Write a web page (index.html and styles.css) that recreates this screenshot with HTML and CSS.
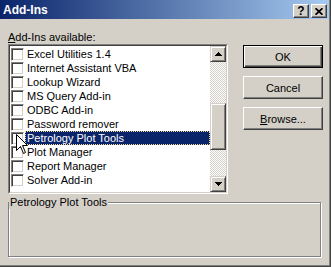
FILE: index.html
```html
<!DOCTYPE html>
<html lang="en">
<head>
    <meta charset="UTF-8">
    <title>Add-Ins</title>
    <link rel="stylesheet" href="styles.css">
</head>
<body>
    <div class="window">
        <div class="frame">
            <div class="titlebar">
                <span class="title">Add-Ins</span>
                <div class="caption-buttons">
                    <span class="cap-btn help">?</span>
                    <span class="cap-btn close">
                        <svg width="8" height="7" viewBox="0 0 8 7"><path d="M0.5 0.2 L7.5 6.8 M7.5 0.2 L0.5 6.8" stroke="#000" stroke-width="1.7"/></svg>
                    </span>
                </div>
            </div>

            <div class="content">
                <div class="main">
                    <div class="left">
                        <div class="label"><u>A</u>dd-Ins available:</div>
                        <div class="listbox">
                            <div class="listbox-inner">
                                <ul class="items">
                                    <li><span class="check"></span><span class="name">Excel Utilities 1.4</span></li>
                                    <li><span class="check"></span><span class="name">Internet Assistant VBA</span></li>
                                    <li><span class="check"></span><span class="name">Lookup Wizard</span></li>
                                    <li><span class="check"></span><span class="name">MS Query Add-in</span></li>
                                    <li><span class="check"></span><span class="name">ODBC Add-in</span></li>
                                    <li><span class="check"></span><span class="name">Password remover</span></li>
                                    <li class="selected"><span class="check"></span><span class="name">Petrology Plot Tools</span></li>
                                    <li><span class="check"></span><span class="name">Plot Manager</span></li>
                                    <li><span class="check"></span><span class="name">Report Manager</span></li>
                                    <li><span class="check"></span><span class="name">Solver Add-in</span></li>
                                </ul>
                                <div class="scrollbar">
                                    <div class="sb-btn">
                                        <svg width="7" height="4" viewBox="0 0 7 4"><path d="M3 0h1v1h1v1h1v1h1v1H0V3h1V2h1V1h1z" fill="#000"/></svg>
                                    </div>
                                    <div class="track"><div class="thumb"></div></div>
                                    <div class="sb-btn">
                                        <svg width="7" height="4" viewBox="0 0 7 4"><path d="M0 0h7v1H6v1H5v1H4v1H3V3H2V2H1V1H0z" fill="#000"/></svg>
                                    </div>
                                </div>
                            </div>
                        </div>
                    </div>
                    <div class="buttons">
                        <button class="btn default">OK</button>
                        <button class="btn">Cancel</button>
                        <button class="btn"><u>B</u>rowse...</button>
                    </div>
                </div>

                <fieldset class="details">
                    <legend>Petrology Plot Tools</legend>
                </fieldset>
            </div>
        </div>

        <!-- mouse pointer -->
        <svg class="cursor" width="13" height="21" viewBox="0 0 13 21">
            <path d="M0.5 0.5 V16.5 L4.5 12.5 L7.5 19.5 L9.5 18.5 L6.5 11.5 H11.5 Z" fill="#fff" stroke="#000" stroke-width="1"/>
        </svg>
    </div>
</body>
</html>
```

FILE: styles.css
```css
body {
    margin: 0;
    font-family: "Liberation Sans", Arial, sans-serif;
    font-size: 11px;
    color: #000;
}
.window {
    position: relative;
    width: 331px;
    height: 267px;
    box-sizing: border-box;
    background-color: #d4d0c8;
    border-right: 1px solid #404040;
    border-bottom: 1px solid #404040;
}
.frame {
    height: 100%;
    box-sizing: border-box;
    border-right: 1px solid #808080;
    border-bottom: 1px solid #808080;
}
.titlebar {
    height: 19px;
    display: flex;
    align-items: center;
    justify-content: space-between;
    padding: 0 2px 0 3px;
    background: linear-gradient(to right, #0a246a, #a6caf0);
    color: #fff;
}
.title {
    font-weight: bold;
    font-size: 12px;
}
.caption-buttons {
    display: flex;
    gap: 2px;
    align-self: flex-start;
    margin-top: 4px;
}
.cap-btn {
    width: 16px;
    height: 14px;
    box-sizing: border-box;
    display: flex;
    align-items: center;
    justify-content: center;
    background-color: #d4d0c8;
    border: 1px solid;
    border-color: #fff #404040 #404040 #fff;
    box-shadow: inset -1px -1px #808080;
    color: #000;
}
.cap-btn.help {
    font-weight: bold;
    font-size: 12px;
    line-height: 12px;
}
.content {
    padding: 11px 6px 0 8px;
}
.main {
    display: flex;
    gap: 15px;
}
.left {
    width: 220px;
}
.label {
    height: 14px;
    line-height: 14px;
}
.listbox {
    height: 150px;
    box-sizing: border-box;
    border: 1px solid;
    border-color: #808080 #fff #fff #808080;
}
.listbox-inner {
    height: 100%;
    box-sizing: border-box;
    display: flex;
    border: 1px solid;
    border-color: #404040 #d4d0c8 #d4d0c8 #404040;
}
.items {
    flex: 1;
    list-style: none;
    margin: 0;
    padding: 1px 0 0;
    background-color: #fff;
}
.items li {
    display: flex;
    height: 14px;
}
.check {
    width: 13px;
    height: 13px;
    box-sizing: border-box;
    margin: 1px 1px 0 1px;
    border: 1px solid;
    border-color: #808080 #fff #fff #808080;
    box-shadow: inset 1px 1px #404040, inset -1px -1px #d4d0c8;
    background-color: #fff;
}
.name {
    flex: 1;
    padding-left: 2px;
    line-height: 14px;
    white-space: nowrap;
}
.selected .name {
    background-color: #0a246a;
    color: #fff;
    outline: 1px dotted #f5db95;
    outline-offset: -1px;
}
.scrollbar {
    width: 16px;
    display: flex;
    flex-direction: column;
}
.sb-btn, .thumb {
    box-sizing: border-box;
    background-color: #d4d0c8;
    border: 1px solid;
    border-color: #d4d0c8 #404040 #404040 #d4d0c8;
    box-shadow: inset 1px 1px #fff, inset -1px -1px #808080;
}
.sb-btn {
    height: 16px;
    display: flex;
    align-items: center;
    justify-content: center;
}
.track {
    flex: 1;
    background: repeating-conic-gradient(#fff 0 25%, #d4d0c8 0 50%) 0 0 / 2px 2px;
}
.thumb {
    margin-top: 41px;
    height: 47px;
}
.buttons {
    display: flex;
    flex-direction: column;
    gap: 8px;
    padding-top: 15px;
}
.btn {
    width: 80px;
    height: 23px;
    padding: 0;
    font-family: inherit;
    font-size: 11px;
    color: #000;
    background-color: #d4d0c8;
    border: 1px solid;
    border-color: #fff #404040 #404040 #fff;
    box-shadow: inset -1px -1px #808080;
}
.btn.default {
    border-color: #000;
    box-shadow: inset 1px 1px #fff, inset -1px -1px #404040, inset -2px -2px #808080;
}
.details {
    margin: 2px 0 0;
    padding: 0;
    width: 313px;
    height: 61px;
    box-sizing: border-box;
    border: 1px solid #808080;
    box-shadow: inset 1px 1px #fff, 1px 1px #fff;
}
.details legend {
    padding: 0 1px;
    line-height: 13px;
    background-color: #d4d0c8;
}
.cursor {
    position: absolute;
    left: 16px;
    top: 134px;
}
```
